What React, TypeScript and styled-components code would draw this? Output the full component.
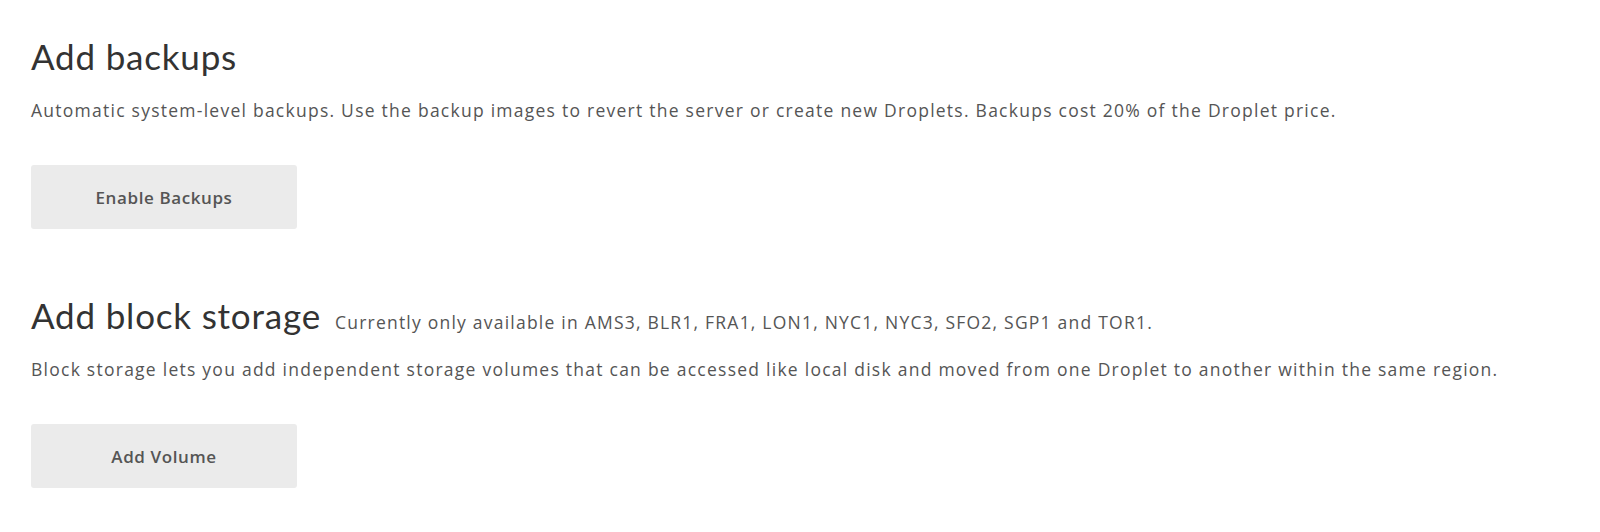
import React from "react";
import styled, { createGlobalStyle } from "styled-components";

const GlobalStyle = createGlobalStyle`
  html, body {
    margin: 0;
    padding: 0;
    background: #ffffff;
  }
  body {
    font-family: "Open Sans", Lato, sans-serif;
    color: #333333;
  }
`;

const Page = styled.div`
  display: flex;
  flex-direction: column;
  gap: 65px;
  padding: 35px 0 0 31px;
`;

const Section = styled.section`
  display: flex;
  flex-direction: column;
`;

const TitleRow = styled.div`
  display: flex;
  align-items: baseline;
  gap: 14px;
`;

const Title = styled.h2`
  margin: 0;
  font-family: Lato, "Open Sans", sans-serif;
  font-size: 35px;
  line-height: 42px;
  font-weight: 400;
  letter-spacing: 0.8px;
  color: #333333;
`;

const Note = styled.span`
  font-size: 17.5px;
  line-height: 24px;
  letter-spacing: 1.22px;
  color: #555555;
`;

const Description = styled.p`
  margin: 21px 0 0;
  font-size: 17.5px;
  line-height: 24px;
  letter-spacing: 1.25px;
  color: #555555;
`;

const ActionButton = styled.button`
  margin-top: 43px;
  width: 266px;
  height: 64px;
  border: none;
  border-radius: 3px;
  background: #ebebeb;
  color: #555555;
  font-family: "Open Sans", Lato, sans-serif;
  font-size: 17px;
  font-weight: 600;
  letter-spacing: 0.6px;
  cursor: pointer;
`;

export default function App() {
  return (
    <>
      <GlobalStyle />
      <Page>
        <Section>
          <TitleRow>
            <Title>Add backups</Title>
          </TitleRow>
          <Description>
            Automatic system-level backups. Use the backup images to revert the server or create new
            Droplets. Backups cost 20% of the Droplet price.
          </Description>
          <ActionButton>Enable Backups</ActionButton>
        </Section>
        <Section>
          <TitleRow>
            <Title>Add block storage</Title>
            <Note>Currently only available in AMS3, BLR1, FRA1, LON1, NYC1, NYC3, SFO2, SGP1 and TOR1.</Note>
          </TitleRow>
          <Description>
            Block storage lets you add independent storage volumes that can be accessed like local disk
            and moved from one Droplet to another within the same region.
          </Description>
          <ActionButton>Add Volume</ActionButton>
        </Section>
      </Page>
    </>
  );
}
